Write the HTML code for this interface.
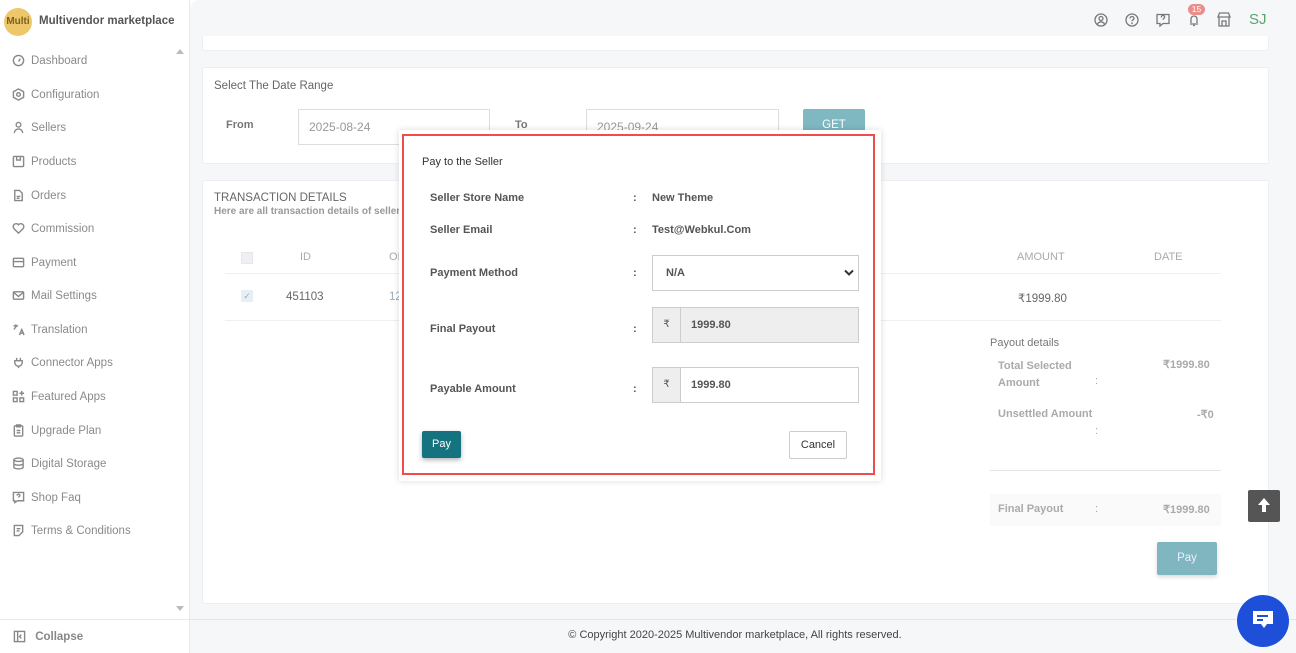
<!DOCTYPE html>
<html><head><meta charset="utf-8"><style>
*{box-sizing:border-box;margin:0;padding:0}
body{width:1296px;height:653px;overflow:hidden;font-family:"Liberation Sans",sans-serif;background:#fff;position:relative;color:#555}
.a{position:absolute}
#side{left:0;top:0;width:190px;height:653px;background:#fff;border-right:1px solid #e8e9ec}
.nav{left:12px;font-size:11.5px;color:#8a8a8a;display:flex;align-items:center;gap:6px}
.nav svg{width:13px;height:13px;stroke:#888;fill:none;stroke-width:1.5}
#main{left:190px;top:0;width:1106px;height:653px;background:#f6f7f9;border-top-left-radius:10px}
.card{background:#fff;border:1px solid #eceef1;border-radius:3px}
.in{border:1px solid #ddd;background:#fff;font-size:12px;color:#999;padding:0 10px;display:flex;align-items:center}
.th{font-size:11px;color:#aaa}
.lbl{font-size:11px;font-weight:bold;color:#555}
</style></head><body>
<div id="side" class="a">
 <div class="a" style="left:4px;top:8px;width:28px;height:28px;border-radius:50%;background:#edc76a;font-size:10px;color:#7a6020;line-height:28px;text-align:center;font-weight:bold">Multi</div>
 <div class="a" style="left:39px;top:15px;font-size:11.5px;font-weight:bold;color:#555">Multivendor marketplace</div>
 <div class="a" style="left:176px;top:49px;width:0;height:0;border-left:4px solid transparent;border-right:4px solid transparent;border-bottom:5px solid #bbb"></div>
 <div class="a" style="left:176px;top:606px;width:0;height:0;border-left:4px solid transparent;border-right:4px solid transparent;border-top:5px solid #bbb"></div>
 <div class="a nav" style="top:54px"><svg viewBox="0 0 14 14"><circle cx="7" cy="7" r="5.5"/><path d="M7 8l2-3"/></svg>Dashboard</div>
 <div class="a nav" style="top:88px"><svg viewBox="0 0 14 14"><path d="M7 1l5.5 3v6L7 13 1.5 10V4z"/><circle cx="7" cy="7" r="2"/></svg>Configuration</div>
 <div class="a nav" style="top:121px"><svg viewBox="0 0 14 14"><circle cx="7" cy="4" r="2.5"/><path d="M2.5 13a4.5 4.5 0 019 0"/></svg>Sellers</div>
 <div class="a nav" style="top:155px"><svg viewBox="0 0 14 14"><rect x="1.5" y="1.5" width="11" height="11" rx="1"/><path d="M5 1.5v4h4v-4"/></svg>Products</div>
 <div class="a nav" style="top:189px"><svg viewBox="0 0 14 14"><path d="M3 1.5h5l3 3v8H3z"/><path d="M5 8h4M5 10h3"/></svg>Orders</div>
 <div class="a nav" style="top:222px"><svg viewBox="0 0 14 14"><path d="M7 12L2 7a3 3 0 015-4 3 3 0 015 4z"/></svg>Commission</div>
 <div class="a nav" style="top:256px"><svg viewBox="0 0 14 14"><rect x="1.5" y="2.5" width="11" height="9" rx="1"/><path d="M1.5 6h11"/></svg>Payment</div>
 <div class="a nav" style="top:289px"><svg viewBox="0 0 14 14"><rect x="1.5" y="3" width="11" height="8" rx="1"/><path d="M1.5 3.5L7 8l5.5-4.5"/></svg>Mail Settings</div>
 <div class="a nav" style="top:323px"><svg viewBox="0 0 14 14"><path d="M1.5 3h5M4 1.5v1.5M2 7l3-4M8 13l2.5-6 2.5 6M9 11h3"/></svg>Translation</div>
 <div class="a nav" style="top:356px"><svg viewBox="0 0 14 14"><path d="M3 5h8v2a4 4 0 01-8 0zM5 2v3M9 2v3M7 11v2"/></svg>Connector Apps</div>
 <div class="a nav" style="top:390px"><svg viewBox="0 0 14 14"><rect x="1.5" y="1.5" width="4" height="4"/><rect x="1.5" y="8.5" width="4" height="4"/><rect x="8.5" y="8.5" width="4" height="4"/><path d="M10.5 1v5M8 3.5h5"/></svg>Featured Apps</div>
 <div class="a nav" style="top:424px"><svg viewBox="0 0 14 14"><rect x="2.5" y="2" width="9" height="11" rx="1"/><path d="M5 1h4v2H5zM5 7h4M5 9.5h4"/></svg>Upgrade Plan</div>
 <div class="a nav" style="top:457px"><svg viewBox="0 0 14 14"><ellipse cx="7" cy="3" rx="5" ry="1.8"/><path d="M2 3v8c0 1 2.2 1.8 5 1.8s5-.8 5-1.8V3M2 7c0 1 2.2 1.8 5 1.8S12 8 12 7"/></svg>Digital Storage</div>
 <div class="a nav" style="top:491px"><svg viewBox="0 0 14 14"><path d="M1.5 1.5h11v9H6l-3 2v-2H1.5z"/><path d="M5.5 5a1.5 1.5 0 113 0c0 1-1.5 1-1.5 2"/></svg>Shop Faq</div>
 <div class="a nav" style="top:524px"><svg viewBox="0 0 14 14"><path d="M2.5 1.5h9v7l-4 4h-5z"/><path d="M5 5h4M5 7.5h3"/></svg>Terms &amp; Conditions</div>
 <div class="a" style="left:0;top:619px;width:189px;border-top:1px solid #e8e9ec"></div>
 <div class="a nav" style="top:630px;left:13px;font-weight:bold;color:#888"><svg viewBox="0 0 14 14"><rect x="1.5" y="1.5" width="11" height="11"/><path d="M5 1.5v11M9 5l-2 2 2 2"/></svg>&nbsp;Collapse</div>
</div>
<div id="main" class="a">
 <div class="a card" style="left:12px;top:36px;width:1067px;height:15px;border-top:none;border-radius:0 0 3px 3px"></div>
 <!-- top icons -->
 <svg class="a" style="left:903px;top:12px;z-index:2" width="120" height="16" fill="none" stroke="#777" stroke-width="1.3">
  <circle cx="8" cy="8" r="6"/><circle cx="8" cy="6.5" r="2"/><path d="M4.5 12a4 4 0 017 0"/>
  <circle cx="39" cy="8" r="6"/><path d="M37 6.5a2 2 0 114 0c0 1.3-2 1.3-2 2.7"/><circle cx="39" cy="11.3" r=".3"/>
  <path d="M64 2.5h12v9h-6l-3 2.5v-2.5h-3z"/><path d="M68.5 5.5a1.6 1.6 0 113 0c0 1-1.5 1-1.5 2.2"/>
  <path d="M97 12h8M98 11V7a3 3 0 016 0v4M100 13.5h2"/>
 </svg>
 <div class="a" style="z-index:2;left:998px;top:4px;width:17px;height:11px;border-radius:6px;background:#ee8b8b;color:#fff;font-size:8.5px;text-align:center;line-height:11px">15</div>
 <svg class="a" style="left:1027px;top:12px;z-index:2" width="14" height="15" fill="none" stroke="#777" stroke-width="1.3"><path d="M1 5L2.5 1h9L13 5zM2 5v9h10V5M5 14V9h4v5"/></svg>
 <div class="a" style="z-index:2;left:1059px;top:11px;font-size:15px;color:#5aa56a">SJ</div>

 <div class="a card" style="left:12px;top:67px;width:1067px;height:97px">
  <div class="a" style="left:11px;top:12px;font-size:11.5px;color:#666">Select The Date Range</div>
  <div class="a" style="left:23px;top:51px;font-size:11px;font-weight:bold;color:#777">From</div>
  <div class="a in" style="left:95px;top:41px;width:192px;height:36px">2025-08-24</div>
  <div class="a" style="left:312px;top:51px;font-size:11px;font-weight:bold;color:#777">To</div>
  <div class="a in" style="left:383px;top:41px;width:193px;height:36px">2025-09-24</div>
  <div class="a" style="left:600px;top:41px;width:62px;height:32px;background:#7fb8c1;color:#fff;font-size:11.5px;text-align:center;line-height:32px;border-radius:2px">GET</div>
 </div>
 <div class="a card" style="left:12px;top:180px;width:1067px;height:424px">
  <div class="a" style="left:11px;top:11px;font-size:11.5px;color:#666">TRANSACTION DETAILS</div>
  <div class="a" style="left:11px;top:25px;font-size:10px;color:#999;font-weight:bold">Here are all transaction details of sellers</div>
  <div class="a" style="left:38px;top:71px;width:12px;height:12px;background:#eef0f4;border:1px solid #e5e7ea"></div>
  <div class="a th" style="left:97px;top:70px">ID</div>
  <div class="a th" style="left:186px;top:70px">OI</div>
  <div class="a th" style="left:814px;top:70px">AMOUNT</div>
  <div class="a th" style="left:951px;top:70px">DATE</div>
  <div class="a" style="left:22px;top:92px;width:996px;border-top:1px solid #f0f0f0"></div>
  <div class="a" style="left:38px;top:109px;width:12px;height:12px;background:#e8eef6;color:#9ab;font-size:9px;text-align:center;line-height:12px">✓</div>
  <div class="a" style="left:83px;top:110px;font-size:11.5px;color:#666">451103</div>
  <div class="a" style="left:186px;top:110px;font-size:11.5px;color:#9ab">12</div>
  <div class="a" style="left:815px;top:110px;font-size:11.5px;color:#666">₹1999.80</div>
  <div class="a" style="left:22px;top:139px;width:996px;border-top:1px solid #f0f0f0"></div>
  <div class="a" style="left:787px;top:156px;font-size:11px;color:#777">Payout details</div>
  <div class="a" style="left:795px;top:177px;font-size:11px;color:#aaa;font-weight:bold;line-height:17px">Total Selected<br>Amount</div>
  <div class="a" style="left:892px;top:194px;font-size:11px;color:#aaa">:</div>
  <div class="a" style="left:960px;top:177px;font-size:11px;color:#aaa;font-weight:bold">₹1999.80</div>
  <div class="a" style="left:795px;top:227px;font-size:11px;color:#aaa;font-weight:bold">Unsettled Amount</div>
  <div class="a" style="left:892px;top:244px;font-size:11px;color:#aaa">:</div>
  <div class="a" style="left:994px;top:227px;font-size:11px;color:#aaa;font-weight:bold">-₹0</div>
  <div class="a" style="left:787px;top:289px;width:231px;border-top:1px solid #e5e5e5"></div>
  <div class="a" style="left:787px;top:313px;width:231px;height:32px;background:#fafafa"></div>
  <div class="a" style="left:795px;top:322px;font-size:11px;color:#aaa;font-weight:bold">Final Payout</div>
  <div class="a" style="left:892px;top:322px;font-size:11px;color:#aaa">:</div>
  <div class="a" style="left:960px;top:322px;font-size:11px;color:#aaa;font-weight:bold">₹1999.80</div>
  <div class="a" style="left:954px;top:361px;width:60px;height:33px;background:#80b6bf;color:#eef;font-size:11.5px;text-align:center;line-height:33px;border-radius:2px;box-shadow:0 2px 4px rgba(0,0,0,.15)">Pay</div>
 </div>
 <div class="a" style="left:0;top:619px;width:1106px;border-top:1px solid #e3e5e8"></div>
 <div class="a" style="left:0;top:629px;width:1090px;text-align:center;font-size:11px;color:#444">© Copyright 2020-2025 Multivendor marketplace, All rights reserved.</div>
 <div class="a" style="left:1058px;top:490px;width:32px;height:32px;background:#555;border-radius:2px"><svg width="32" height="32" fill="#fff"><path d="M16 8l-6 7h4v7h4v-7h4z"/></svg></div>
 <div class="a" style="left:1047px;top:595px;width:52px;height:52px;border-radius:50%;background:#1d4fd8"><svg width="52" height="52"><path d="M16 16h20v13h-6l-3 4-3-4h-8z" fill="#fff"/><path d="M20 21h11M20 25h6" stroke="#1d4fd8" stroke-width="2"/></svg></div>
</div>

<!-- modal -->
<div class="a" style="left:399px;top:130px;width:482px;height:351px;background:#fff;box-shadow:0 0 6px rgba(0,0,0,.15)"></div>
<div class="a" style="left:402px;top:134px;width:473px;height:341px;border:2px solid #f24b4b">
 <div class="a" style="left:18px;top:20px;font-size:11px;color:#333">Pay to the Seller</div>
 <div class="a lbl" style="left:26px;top:56px">Seller Store Name</div>
 <div class="a lbl" style="left:229px;top:56px">:</div>
 <div class="a lbl" style="left:248px;top:56px">New Theme</div>
 <div class="a lbl" style="left:26px;top:88px">Seller Email</div>
 <div class="a lbl" style="left:229px;top:88px">:</div>
 <div class="a lbl" style="left:248px;top:88px">Test@Webkul.Com</div>
 <div class="a lbl" style="left:26px;top:131px">Payment Method</div>
 <div class="a lbl" style="left:229px;top:131px">:</div>
 <div class="a" style="left:248px;top:119px;width:207px;height:36px;border:1px solid #ccc;font-size:11px;font-weight:bold;color:#555;padding:11px 0 0 13px">N/A<svg class="a" style="right:4px;top:13px" width="10" height="8" fill="none" stroke="#333" stroke-width="2"><path d="M1 1.5l4 4 4-4"/></svg></div>
 <div class="a lbl" style="left:26px;top:187px">Final Payout</div>
 <div class="a lbl" style="left:229px;top:187px">:</div>
 <div class="a" style="left:248px;top:171px;width:207px;height:36px;border:1px solid #ccc;background:#eee;display:flex"><div style="width:28px;border-right:1px solid #ccc;font-size:10px;text-align:center;line-height:34px">₹</div><div style="padding-left:10px;font-size:11px;font-weight:bold;line-height:34px">1999.80</div></div>
 <div class="a lbl" style="left:26px;top:247px">Payable Amount</div>
 <div class="a lbl" style="left:229px;top:247px">:</div>
 <div class="a" style="left:248px;top:231px;width:207px;height:36px;border:1px solid #ccc;background:#fff;display:flex"><div style="width:28px;border-right:1px solid #ccc;background:#eee;font-size:10px;text-align:center;line-height:34px">₹</div><div style="padding-left:10px;font-size:11px;font-weight:bold;line-height:34px">1999.80</div></div>
 <div class="a" style="left:18px;top:295px;width:39px;height:27px;background:#157380;color:#fff;font-size:11px;text-align:center;line-height:27px;border-radius:2px;box-shadow:0 2px 5px rgba(0,0,0,.3)">Pay</div>
 <div class="a" style="left:385px;top:295px;width:58px;height:28px;border:1px solid #ccc;border-radius:2px;font-size:11px;color:#333;text-align:center;line-height:26px">Cancel</div>
</div>
</body></html>
